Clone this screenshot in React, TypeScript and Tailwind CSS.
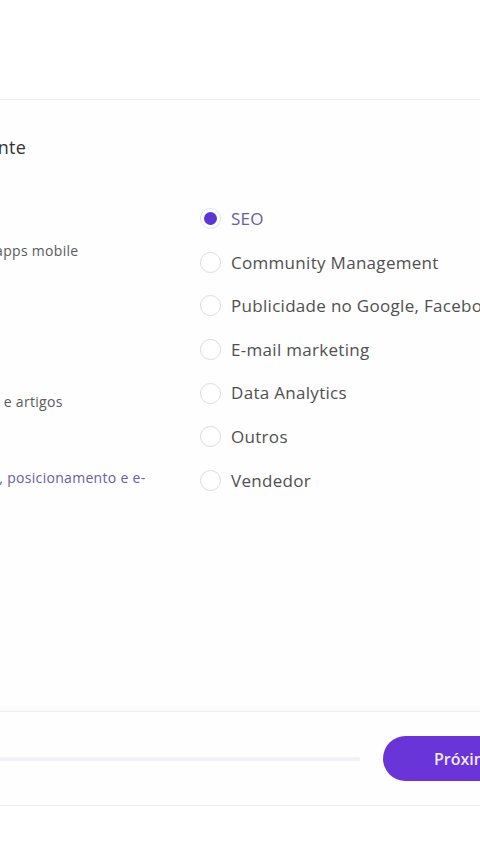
import React from 'react';

const services = [
  'SEO',
  'Community Management',
  'Publicidade no Google, Facebook e Instagram',
  'E-mail marketing',
  'Data Analytics',
  'Outros',
  'Vendedor',
];

const categories = [
  { label: 'Desenvolvimento de sites e apps mobile', active: false },
  { label: 'Vídeo e fotografia', active: false },
  { label: 'Redação de posts para blogs e artigos', active: false },
  { label: 'Gestão de imagem da marca, posicionamento e e-commerce', active: true },
];

const Radio = ({ checked }: { checked: boolean }) => (
  <span
    className={
      checked
        ? 'flex h-[21px] w-[21px] shrink-0 items-center justify-center rounded-full border border-[#e4defa] bg-white'
        : 'h-[21px] w-[21px] shrink-0 rounded-full border border-[#dcdce0] bg-white'
    }
  >
    {checked && <span className="h-[13px] w-[13px] rounded-full bg-[#5b35d5]" />}
  </span>
);

const App = () => {
  return (
    <div className="h-[854px] w-[480px] overflow-hidden bg-white font-['Open_Sans','Liberation_Sans',sans-serif]">
      <div className="h-[99px] bg-white" />
      <div className="-ml-[400px] w-[1000px]">
        <div className="h-[612px] border-t border-[#ececef] bg-[#fefefe]">
          <h2 className="pl-[146px] pt-[35px] text-[18px] leading-[24px] tracking-[0.3px] text-[#333]">
            Escolha o serviço mais relevante
          </h2>
          <div className="mt-[38px] flex">
            <ul className="w-[560px] shrink-0 pl-[205px] pt-[44px]">
              {categories.map((c) => (
                <li
                  key={c.label}
                  className={
                    c.active
                      ? 'h-[75.5px] text-[14px] leading-[20px] tracking-[0.3px] text-[#6a5ca8]'
                      : 'h-[75.5px] text-[14px] leading-[20px] tracking-[0.3px] text-[#5a5a5a]'
                  }
                >
                  {c.label}
                </li>
              ))}
            </ul>
            <ul className="ml-[40px] flex flex-col">
              {services.map((s, i) => (
                <li key={s} className="flex h-[43.6px] items-center gap-[10px] whitespace-nowrap">
                  <Radio checked={i === 0} />
                  <span
                    className={
                      i === 0
                        ? 'text-[17px] tracking-[0.3px] text-[#6a5ca8]'
                        : 'text-[17px] tracking-[0.3px] text-[#505050]'
                    }
                  >
                    {s}
                  </span>
                </li>
              ))}
            </ul>
          </div>
        </div>
        <div className="flex h-[95px] items-center border-t border-b border-[#eeeef2] bg-[#fefefe] shadow-[0_-3px_6px_rgba(0,0,0,0.02)]">
          <div className="h-[4px] w-[760px] rounded-full bg-[#f1f1f6]" />
          <button
            type="button"
            className="ml-[23px] h-[45px] w-[150px] rounded-full bg-[#6934d8] pl-[51px] text-left text-[16px] font-semibold text-[#f1e8ff]"
          >
            Próximo
          </button>
        </div>
      </div>
    </div>
  );
};

export default App;
